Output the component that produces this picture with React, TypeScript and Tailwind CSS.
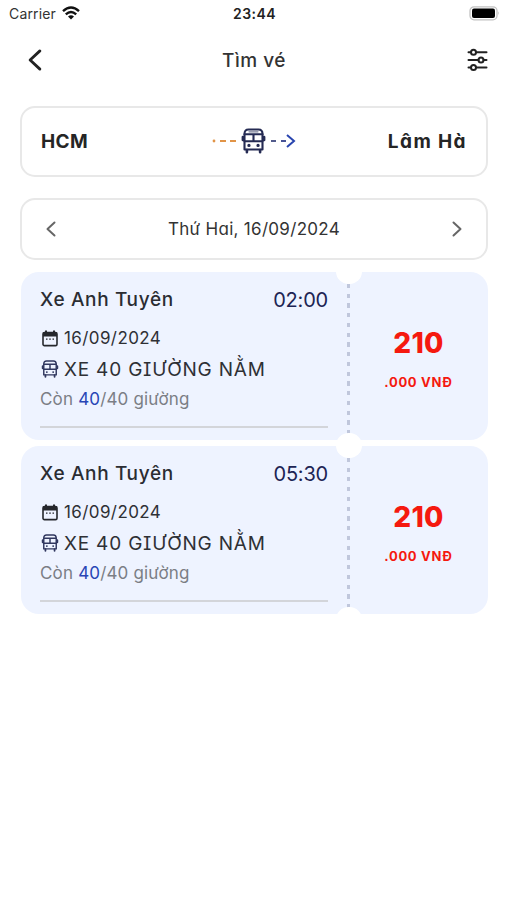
import React from "react";

const BusIcon = ({ className, detail = true }: { className: string; detail?: boolean }) => (
  <svg viewBox="0 0 24 26" className={className} fill="none" stroke="currentColor" strokeWidth="2.1" strokeLinejoin="round" strokeLinecap="round">
    <path d="M3 21.5V6Q3 1.5 7 1.5H17Q21 1.5 21 6V21.5Z" />
    <path d="M3 6.2H21M3 13.3H21M12 6.2V13.3" />
    {detail && <path d="M7.5 3.8H16.5" strokeWidth="1.2" opacity=".6" />}
    <path d="M1.4 9V12M22.6 9V12M5.4 22V24.3M18.6 22V24.3" strokeWidth="2.6" />
    <path d="M7.4 17.4H7.5M16.5 17.4H16.6" strokeWidth={detail ? "3.2" : "2.6"} />
  </svg>
);

const CalendarIcon = () => (
  <svg viewBox="0 0 16 17" className="h-[17px] w-4 text-[#25272c]" fill="none">
    <rect x="1" y="2.6" width="14" height="13" rx="1.4" stroke="currentColor" strokeWidth="1.6" />
    <path d="M1 2.5H15V6.5H1ZM3 .4H5V3H3ZM11 .4H13V3H11Z" fill="currentColor" />
    <path d="M4 9.2H5.5M7.2 9.2H8.8M10.5 9.2H12" stroke="currentColor" strokeWidth="1.2" />
  </svg>
);

const Chevron = ({ right = false, className }: { right?: boolean; className: string }) => (
  <svg viewBox="0 0 10 16" className={className} fill="none" stroke="currentColor" strokeWidth="2" strokeLinecap="round" strokeLinejoin="round">
    <path d={right ? "M1.5 1.5L8.5 8L1.5 14.5" : "M8.5 1.5L1.5 8L8.5 14.5"} />
  </svg>
);

function Ticket({ time }: { time: string }) {
  return (
    <article className="relative flex h-[168px] overflow-hidden rounded-[18px] bg-[#eef3ff]">
      <div className="flex w-[307px] shrink-0 flex-col pl-[19px]">
        <div className="mt-[15px] flex h-6 items-center justify-between">
          <h2 className="whitespace-nowrap pt-0.5 text-[19px] font-medium tracking-[0.65px] text-[#2a2c32]">Xe Anh Tuyên</h2>
          <time className="mt-0.5 whitespace-nowrap text-[20px] tracking-[-0.2px] text-[#1c2454]">{time}</time>
        </div>
        <div className="mt-[15px] flex h-6 items-center gap-[6px] pl-0.5">
          <CalendarIcon />
          <span className="whitespace-nowrap pt-0.5 text-[17px] tracking-[0.4px] text-[#2e3035]">16/09/2024</span>
        </div>
        <div className="mt-[7px] flex h-6 items-center gap-[5px] pl-px">
          <BusIcon className="h-[18px] w-[18px] text-[#30375f]" detail={false} />
          <span className="whitespace-nowrap pt-0.5 text-[19px] tracking-[0.8px] text-[#2e3035]">XE 40 GIƯỜNG NẰM</span>
        </div>
        <div className="mt-[6px] flex h-6 items-center whitespace-nowrap pt-0.5 text-[17px] tracking-[0.17px] text-[#7b7e85]">
          <span>Còn <span className="text-[#2845b5]">40</span>/40 giường</span>
        </div>
        <div className="mt-[15px] h-0.5 bg-[#d3d5da]" />
      </div>
      <div className="absolute left-[326px] top-3 h-[150px] w-[3px] bg-[repeating-linear-gradient(to_bottom,#c0c7dc_0px,#c0c7dc_4px,transparent_4px,transparent_9.75px)]" />
      <div className="absolute -top-[13px] left-[315px] h-[25px] w-[26px] rounded-full bg-white" />
      <div className="absolute -bottom-[18px] left-[315px] h-[25px] w-[26px] rounded-full bg-white" />
      <div className="ml-[21px] flex flex-1 flex-col items-center text-[#f5190f]">
        <strong className="mt-[55px] text-[28px] font-extrabold leading-8 tracking-[0.3px]">210</strong>
        <span className="mt-[13px] whitespace-nowrap text-[13px] font-bold leading-5 tracking-[0.7px]">.000 VNĐ</span>
      </div>
    </article>
  );
}

export default function App() {
  return (
    <main className="h-[900px] w-[507px] overflow-hidden bg-white font-['Inter','Noto_Sans',sans-serif] [font-feature-settings:'cv11','cv08']">
      <div className="grid h-7 grid-cols-3 items-center pb-0.5 pl-[9px] pr-[7px] [font-feature-settings:normal]">
        <div className="flex items-center gap-[6px] text-[14px] text-[#333]">
          <span className="tracking-[0.15px]">Carrier</span>
          <svg viewBox="0 0 18 14" className="h-[14px] w-[18px]" fill="none" stroke="#111" strokeWidth="2.4">
            <path d="M1 5.2Q9-2 17 5.2M3.8 8.3Q9 3.6 14.2 8.3" />
            <path d="M9 13.5L6 10.5Q9 7.9 12 10.5Z" fill="#111" stroke="none" />
          </svg>
        </div>
        <time className="text-center text-[14px] font-semibold tracking-[0.4px] text-[#222]">23:44</time>
        <svg viewBox="0 0 31 15" className="h-[15px] w-[31px] justify-self-end" fill="none">
          <rect x="1" y=".8" width="27" height="13" rx="4" stroke="#c2c2c2" strokeWidth="1.3" />
          <rect x="3" y="2.6" width="23" height="9.4" rx="2" fill="#000" />
          <path d="M29.3 5.2Q31 7.2 29.3 9.2Z" fill="#b8b8b8" />
        </svg>
      </div>
      <header className="flex h-[64px] items-center justify-between pl-7 pr-[19px]">
        <Chevron className="h-6 w-[14px] text-[#222]" />
        <h1 className="mr-px whitespace-nowrap pt-0.5 text-[19px] font-medium tracking-[0.5px] text-[#333]">Tìm vé</h1>
        <svg viewBox="0 0 21 24" className="h-6 w-[21px]" fill="none" stroke="#222" strokeWidth="2" strokeLinecap="round">
          <path d="M1.5 4.3H4M9 4.3H19.5M1.5 12H11.5M16.5 12H19.5M1.5 19.6H4M9 19.6H19.5" />
          <circle cx="6.5" cy="4.3" r="2.5" /><circle cx="14" cy="12" r="2.5" /><circle cx="6.5" cy="19.6" r="2.5" />
        </svg>
      </header>
      <section className="ml-5 mt-[14px] grid h-[71px] w-[468px] grid-cols-[1fr_auto_1fr] items-center rounded-[15px] border-2 border-[#e8e8e8] pb-0.5 pl-[19px] pr-[19px] text-[19px] font-bold text-[#252525]">
        <span className="pt-[3px] tracking-[0.4px]">HCM</span>
        <div className="flex items-center">
          <svg viewBox="0 0 26 4" className="h-1 w-[26px]" fill="#e19447"><circle cx="2" cy="2" r="1.4" /><rect x="8" y="1" width="6" height="2" /><rect x="18" y="1" width="6" height="2" /></svg>
          <BusIcon className="ml-[3px] h-[26px] w-[25px] text-[#252b53]" />
          <svg viewBox="0 0 28 16" className="ml-[3px] h-4 w-7" fill="none" strokeWidth="2"><path d="M2 8H7" stroke="#525b8c" /><path d="M12 8H17" stroke="#475396" /><path d="M18 2L25 8L18 14" stroke="#2945af" /></svg>
        </div>
        <span className="whitespace-nowrap pt-[3px] text-right tracking-[1.4px]">Lâm Hà</span>
      </section>
      <section className="ml-5 mt-[21px] flex h-[62px] w-[468px] items-center justify-between rounded-[15px] border-2 border-[#e8e8e8] px-6">
        <Chevron className="h-4 w-[10px] text-[#666]" />
        <time className="whitespace-nowrap pt-0.5 text-[17px] tracking-[0.3px] text-[#333]">Thứ Hai, 16/09/2024</time>
        <Chevron right className="h-4 w-[10px] text-[#666]" />
      </section>
      <div className="ml-[21px] mt-3 flex w-[467px] flex-col gap-1.5">
        <Ticket time="02:00" />
        <Ticket time="05:30" />
      </div>
    </main>
  );
}
